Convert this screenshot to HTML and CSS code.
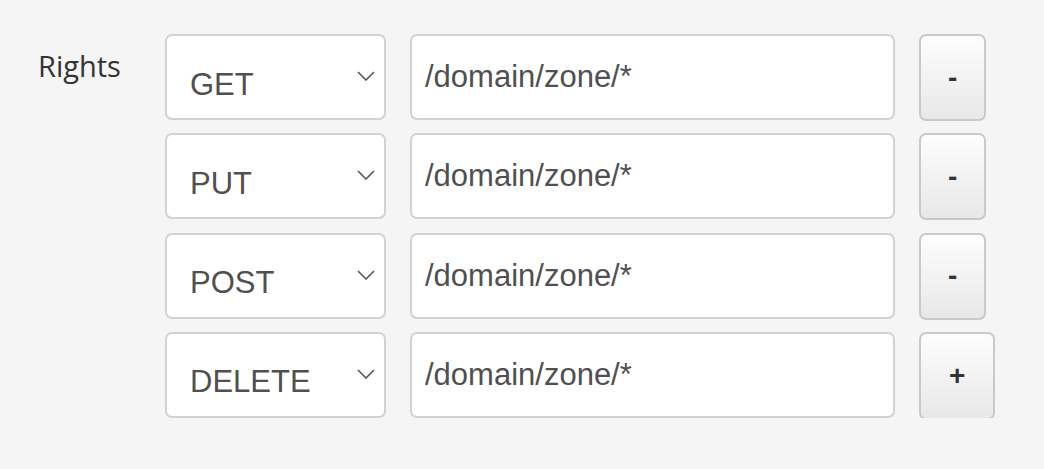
FILE: index.html
```html
<!DOCTYPE html>
<html lang="en">
<head>
<meta charset="utf-8">
<link rel="stylesheet" href="styles.css">
<title>Rights</title>
</head>
<body>
<form class="form">
  <label class="label">Rights</label>
  <div class="rows">
    <div class="row">
      <div class="select-wrap">
        <select class="select"><option>GET</option><option>PUT</option><option>POST</option><option>DELETE</option></select>
        <svg class="chevron" width="18" height="10" viewBox="0 0 18 10"><path d="M1 1 L9 9 L17 1" fill="none" stroke="#555" stroke-width="1.6"/></svg>
      </div>
      <input class="input" type="text" value="/domain/zone/*">
      <button type="button" class="btn">-</button>
    </div>
    <div class="row">
      <div class="select-wrap">
        <select class="select"><option>PUT</option><option>GET</option><option>POST</option><option>DELETE</option></select>
        <svg class="chevron" width="18" height="10" viewBox="0 0 18 10"><path d="M1 1 L9 9 L17 1" fill="none" stroke="#555" stroke-width="1.6"/></svg>
      </div>
      <input class="input" type="text" value="/domain/zone/*">
      <button type="button" class="btn">-</button>
    </div>
    <div class="row">
      <div class="select-wrap">
        <select class="select"><option>POST</option><option>GET</option><option>PUT</option><option>DELETE</option></select>
        <svg class="chevron" width="18" height="10" viewBox="0 0 18 10"><path d="M1 1 L9 9 L17 1" fill="none" stroke="#555" stroke-width="1.6"/></svg>
      </div>
      <input class="input" type="text" value="/domain/zone/*">
      <button type="button" class="btn">-</button>
    </div>
    <div class="row">
      <div class="select-wrap">
        <select class="select"><option>DELETE</option><option>GET</option><option>PUT</option><option>POST</option></select>
        <svg class="chevron" width="18" height="10" viewBox="0 0 18 10"><path d="M1 1 L9 9 L17 1" fill="none" stroke="#555" stroke-width="1.6"/></svg>
      </div>
      <input class="input" type="text" value="/domain/zone/*">
      <button type="button" class="btn btn-plus">+</button>
    </div>
  </div>
</form>
</body>
</html>
```

FILE: styles.css
```css
html, body {
  margin: 0;
  padding: 0;
  background: #f5f5f5;
}

.form {
  display: flex;
  align-items: flex-start;
  padding: 34px 0 0 38px;
  margin: 0;
}

.label {
  width: 127px;
  flex: none;
  margin-top: 14px;
  font-family: "Open Sans", "Noto Sans", sans-serif;
  font-size: 29px;
  line-height: 36px;
  color: #333;
}

.rows {
  display: flex;
  flex-direction: column;
  gap: 13.3px;
}

.row {
  display: flex;
  align-items: stretch;
  height: 86px;
}

.select-wrap {
  position: relative;
  width: 221px;
  margin-right: 24px;
}

.select {
  -webkit-appearance: none;
  appearance: none;
  box-sizing: border-box;
  width: 100%;
  height: 100%;
  margin: 0;
  padding: 14px 40px 0 23px;
  border: 2px solid #d2d2d2;
  border-radius: 7px;
  background: #fff;
  font-family: "Liberation Sans", Arial, sans-serif;
  font-size: 31px;
  color: #505050;
  outline: none;
}

.chevron {
  position: absolute;
  right: 11px;
  top: 37px;
  pointer-events: none;
}

.input {
  box-sizing: border-box;
  width: 485px;
  height: 100%;
  margin: 0 24px 0 0;
  padding: 0 13px;
  border: 2px solid #d2d2d2;
  border-radius: 7px;
  background: #fff;
  font-family: "Liberation Sans", Arial, sans-serif;
  font-size: 31px;
  color: #505050;
  outline: none;
}

.btn {
  box-sizing: border-box;
  height: 87px;
  margin: 0;
  padding: 0 27px;
  border: 2px solid #c9c9c9;
  border-radius: 7px;
  background: linear-gradient(#fdfdfd, #e8e8e8);
  font-family: "Liberation Sans", Arial, sans-serif;
  font-size: 28px;
  font-weight: bold;
  color: #333;
  cursor: pointer;
}

.btn-plus {
  height: 88px;
  padding: 0 28px;
}
```
